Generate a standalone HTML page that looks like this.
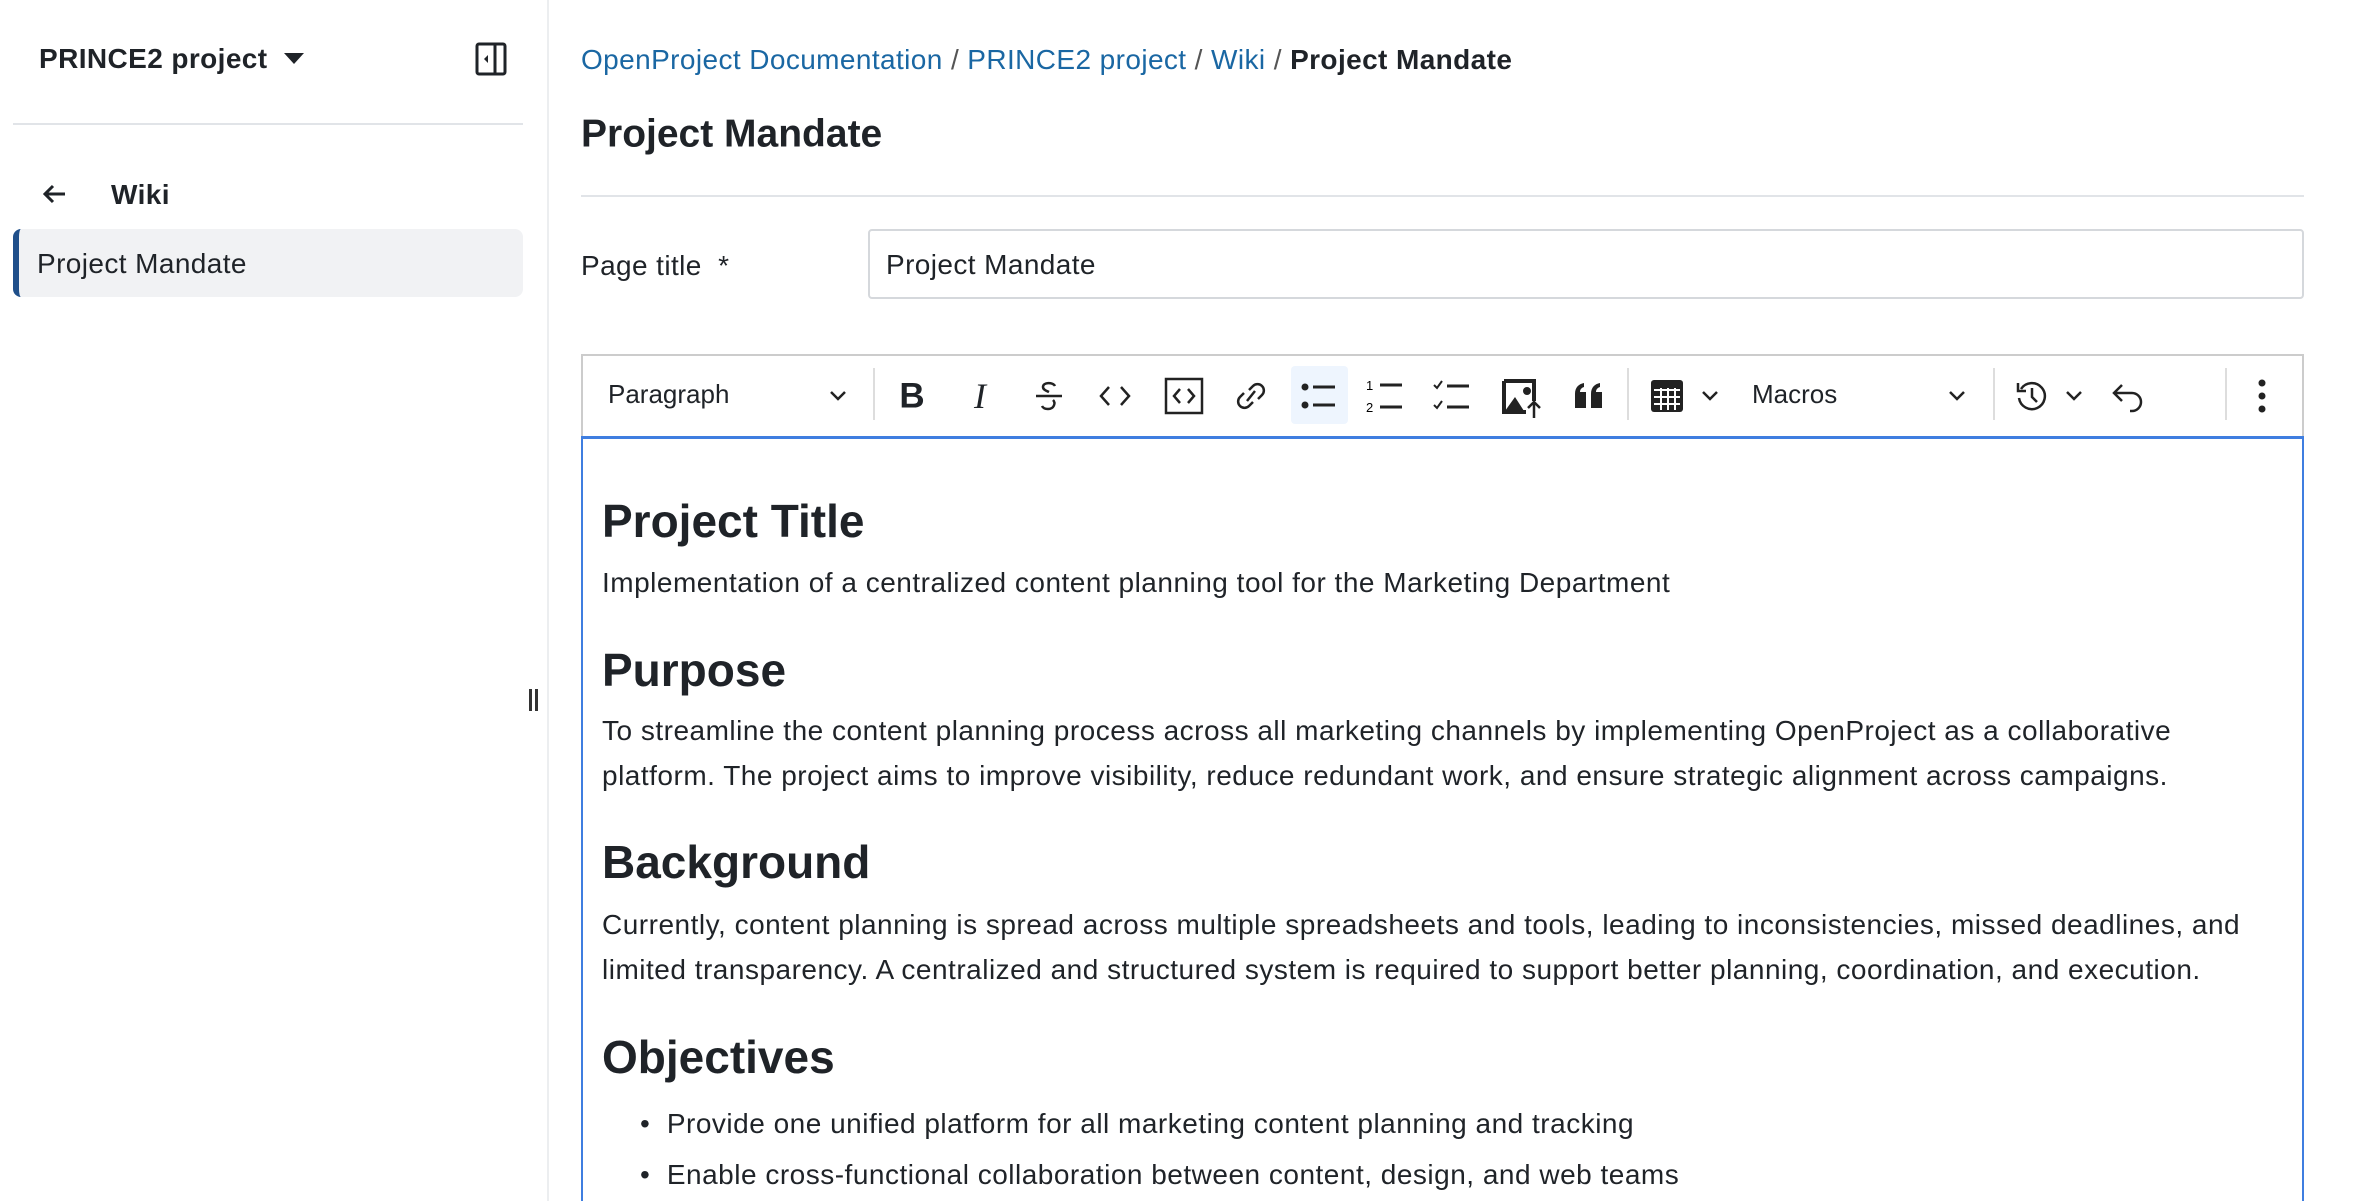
<!DOCTYPE html>
<html style="overflow:hidden;height:1201px"><head><meta charset="utf-8"><style>
*{margin:0;padding:0;box-sizing:border-box}
body{width:2361px;height:1201px;overflow:hidden;background:#fff;font-family:"Liberation Sans",Arial,sans-serif;color:#1f2328;position:relative}
.a{position:absolute;white-space:nowrap}
.t{font-size:28px;line-height:1;letter-spacing:0.4px;transform:translateY(-50%)}
.ic{position:absolute;transform:translate(-50%,-50%)}
svg{display:block}
h2{position:absolute;left:602px;font-size:46px;font-weight:bold;line-height:1;transform:translateY(-50%);white-space:nowrap}
.p{position:absolute;left:602px;font-size:28px;letter-spacing:0.5px;line-height:45px;white-space:nowrap}
</style></head><body>
<!-- sidebar -->
<div class="a t" style="left:39px;top:59px;font-weight:bold">PRINCE2 project</div>
<svg class="a" style="left:283px;top:52px" width="22" height="13"><path d="M1 1h20L11 12z" fill="#1f2328"/></svg>
<svg class="a" style="left:475px;top:42px" width="32" height="34" viewBox="0 0 32 34"><rect x="2" y="2" width="28" height="30" rx="2" fill="none" stroke="#1f2328" stroke-width="3"/><path d="M20 2v30" stroke="#1f2328" stroke-width="3"/><path d="M13 13l-4 4 4 4z" fill="#1f2328"/></svg>
<div class="a" style="left:13px;top:123px;width:510px;height:2px;background:#e1e4e8"></div>
<svg class="a" style="left:41px;top:183px" width="26" height="22" viewBox="0 0 26 22"><path d="M24 11H4M12 3l-8 8 8 8" fill="none" stroke="#1f2328" stroke-width="3"/></svg>
<div class="a t" style="left:111px;top:195px;font-weight:bold">Wiki</div>
<div class="a" style="left:13px;top:229px;width:510px;height:68px;background:#f1f2f4;border-radius:8px;border-left:6px solid #1f4f8a"></div>
<div class="a t" style="left:37px;top:264px">Project Mandate</div>
<div class="a" style="left:547px;top:0;width:2px;height:1201px;background:#eceef0"></div>
<div class="a" style="left:529px;top:689px;width:3px;height:22px;background:#333"></div>
<div class="a" style="left:535px;top:689px;width:3px;height:22px;background:#333"></div>
<!-- main -->
<div class="a t" style="left:581px;top:60px;color:#1a67a3">OpenProject Documentation <span style="color:#555">/</span> PRINCE2 project <span style="color:#555">/</span> Wiki <span style="color:#555">/</span> <b style="color:#1f2328">Project Mandate</b></div>
<div class="a" style="left:581px;top:134px;font-size:39px;font-weight:bold;line-height:1;transform:translateY(-50%)">Project Mandate</div>
<div class="a" style="left:581px;top:195px;width:1723px;height:2px;background:#e1e4e8"></div>
<div class="a t" style="left:581px;top:266px">Page title&nbsp; *</div>
<div class="a" style="left:868px;top:229px;width:1436px;height:70px;border:2px solid #d5d8dc;border-radius:4px"></div>
<div class="a t" style="left:886px;top:265px">Project Mandate</div>
<!-- toolbar -->
<div class="a" style="left:581px;top:354px;width:1723px;height:84px;border:2px solid #ccc;border-bottom:none;background:#fff"></div>
<div class="a" style="left:581px;top:436px;width:1723px;height:765px;border:2px solid #3f7ee0;border-top:3px solid #3f7ee0;border-bottom:none"></div>
<div class="a t" style="left:608px;top:394px;font-size:26px;letter-spacing:0">Paragraph</div>
<div class="a t" style="left:1752px;top:394px;font-size:26px;letter-spacing:0">Macros</div>
<div class="a" style="left:873px;top:368px;width:2px;height:52px;background:#ddd"></div>
<div class="a" style="left:1627px;top:368px;width:2px;height:52px;background:#ddd"></div>
<div class="a" style="left:1993px;top:368px;width:2px;height:52px;background:#ddd"></div>
<div class="a" style="left:2225px;top:368px;width:2px;height:52px;background:#ddd"></div>
<div class="a" style="left:1291px;top:366px;width:57px;height:58px;background:#eef5fe;border-radius:4px"></div>
<!-- chevrons -->
<svg class="ic" style="left:838px;top:396px" width="18" height="12"><path d="M2 2l7 7 7-7" fill="none" stroke="#222" stroke-width="2.5"/></svg>
<svg class="ic" style="left:1710px;top:396px" width="18" height="12"><path d="M2 2l7 7 7-7" fill="none" stroke="#222" stroke-width="2.5"/></svg>
<svg class="ic" style="left:1957px;top:396px" width="18" height="12"><path d="M2 2l7 7 7-7" fill="none" stroke="#222" stroke-width="2.5"/></svg>
<svg class="ic" style="left:2074px;top:396px" width="18" height="12"><path d="M2 2l7 7 7-7" fill="none" stroke="#222" stroke-width="2.5"/></svg>
<!-- B I S -->
<div class="ic" style="left:912px;top:396px;font-size:35px;font-weight:bold;line-height:1">B</div>
<div class="ic" style="left:980px;top:396px;font-size:36px;font-style:italic;font-family:'Liberation Serif',serif;line-height:1">I</div>
<svg class="ic" style="left:1049px;top:396px" width="30" height="34" viewBox="0 0 30 34"><path d="M21 7c-2-4-12-4-12 1 0 3 4 4 6 5M2 17h26M19 21c3 3 1 9-5 9-3 0-5-1-6-3" fill="none" stroke="#222" stroke-width="2.5"/></svg>
<svg class="ic" style="left:1115px;top:396px" width="32" height="22" viewBox="0 0 32 22"><path d="M10 2L2 11l8 9M22 2l8 9-8 9" fill="none" stroke="#222" stroke-width="2.5"/></svg>
<svg class="ic" style="left:1184px;top:396px" width="40" height="38" viewBox="0 0 40 38"><rect x="2" y="2" width="36" height="34" fill="none" stroke="#222" stroke-width="2.5"/><path d="M16 12l-6 7 6 7M24 12l6 7-6 7" fill="none" stroke="#222" stroke-width="2.5"/></svg>
<svg class="ic" style="left:1251px;top:396px" width="32" height="36" viewBox="0 0 32 36"><path d="M14 12l4-4a6 6 0 0 1 9 9l-4 4M18 24l-4 4a6 6 0 0 1-9-9l4-4M12 23l8-10" fill="none" stroke="#222" stroke-width="2.5"/></svg>
<svg class="ic" style="left:1319px;top:396px" width="36" height="30" viewBox="0 0 36 30"><circle cx="4" cy="6" r="3.5" fill="#222"/><circle cx="4" cy="24" r="3.5" fill="#222"/><path d="M12 6h22M12 24h22" stroke="#222" stroke-width="3"/></svg>
<svg class="ic" style="left:1385px;top:396px" width="38" height="36" viewBox="0 0 38 36"><text x="0" y="12" font-size="13" font-family="Liberation Sans">1</text><text x="0" y="34" font-size="13" font-family="Liberation Sans">2</text><path d="M14 7h22M14 29h22" stroke="#222" stroke-width="3"/></svg>
<svg class="ic" style="left:1452px;top:396px" width="38" height="34" viewBox="0 0 38 34"><path d="M1 6l3 3 5-7M1 26l3 3 5-7" fill="none" stroke="#222" stroke-width="2"/><path d="M14 7h22M14 28h22" stroke="#222" stroke-width="3"/></svg>
<svg class="ic" style="left:1521px;top:398px" width="40" height="40" viewBox="0 0 40 40"><path d="M3 3h30v20" fill="none" stroke="#222" stroke-width="4"/><path d="M3 3v31h22" fill="none" stroke="#222" stroke-width="4"/><path d="M4 33l10-14 9 14z" fill="#222"/><circle cx="26" cy="13" r="4" fill="#222"/><path d="M33 40V24M27 30l6-6 6 6" fill="none" stroke="#222" stroke-width="2.5"/></svg>
<svg class="ic" style="left:1589px;top:396px" width="32" height="28" viewBox="0 0 32 28"><path d="M2 12c0-7 4-10 9-11v4c-3 1-4 3-4 5h6v16H2zM18 12c0-7 4-10 9-11v4c-3 1-4 3-4 5h6v16H18z" fill="#222"/></svg>
<svg class="ic" style="left:1667px;top:396px" width="34" height="34" viewBox="0 0 34 34"><rect x="1" y="1" width="32" height="32" rx="3" fill="#222"/><path d="M4 11h26M4 18h26M4 25h26M11 9v22M18 9v22M25 9v22" stroke="#fff" stroke-width="2"/></svg>
<svg class="ic" style="left:2032px;top:396px" width="34" height="34" viewBox="0 0 34 34"><path d="M6 10a13 13 0 1 1-2 9" fill="none" stroke="#222" stroke-width="2.5"/><path d="M3 4v8h8" fill="none" stroke="#222" stroke-width="2.5"/><path d="M17 9v9l5 5" fill="none" stroke="#222" stroke-width="2.5"/></svg>
<svg class="ic" style="left:2128px;top:398px" width="34" height="30" viewBox="0 0 34 30"><path d="M11 2L3 10l8 8M3 10h18a9 9 0 0 1 0 18h-2" fill="none" stroke="#222" stroke-width="2.5"/></svg>
<svg class="ic" style="left:2262px;top:396px" width="8" height="34"><circle cx="4" cy="4" r="3.5" fill="#222"/><circle cx="4" cy="17" r="3.5" fill="#222"/><circle cx="4" cy="30" r="3.5" fill="#222"/></svg>
<!-- content -->
<h2 style="top:521px">Project Title</h2>
<div class="p" style="top:560px">Implementation of a centralized content planning tool for the Marketing Department</div>
<h2 style="top:670px">Purpose</h2>
<div class="p" style="top:708px">To streamline the content planning process across all marketing channels by implementing OpenProject as a collaborative<br>platform. The project aims to improve visibility, reduce redundant work, and ensure strategic alignment across campaigns.</div>
<h2 style="top:862px">Background</h2>
<div class="p" style="top:902px">Currently, content planning is spread across multiple spreadsheets and tools, leading to inconsistencies, missed deadlines, and<br>limited transparency. A centralized and structured system is required to support better planning, coordination, and execution.</div>
<h2 style="top:1057px">Objectives</h2>
<div class="p" style="top:1101px;left:640px">•&nbsp; Provide one unified platform for all marketing content planning and tracking</div>
<div class="p" style="top:1152px;left:640px">•&nbsp; Enable cross-functional collaboration between content, design, and web teams</div>
</body></html>
